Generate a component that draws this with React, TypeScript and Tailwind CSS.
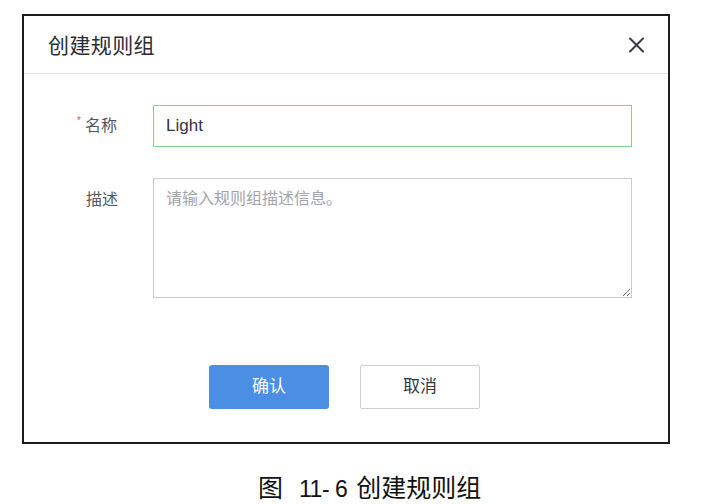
import React from "react";

const font = { fontFamily: '"Liberation Sans", "Noto Sans CJK SC", sans-serif' };

export default function App() {
  return (
    <div className="w-[718px] h-[504px] bg-white overflow-hidden" style={font}>
      <div className="pt-[14px] pl-[22px]">
        <div className="w-[648px] h-[430px] border-2 border-[#1c1c1c] flex flex-col">
          <div className="h-[58px] shrink-0 border-b border-[#e3e4e8] flex items-center justify-between pl-[24px] pr-[23px]">
            <span className="text-[21px] leading-none text-[#2b2b36] tracking-[0.4px] pt-[1px]">创建规则组</span>
            <svg width="17" height="16" viewBox="0 0 17 16" className="text-[#3a3a48]">
              <path d="M2 1.5 L15 14.5 M15 1.5 L2 14.5" stroke="currentColor" strokeWidth="2" strokeLinecap="round" />
            </svg>
          </div>
          <div className="flex flex-col pt-[31px]">
            <div className="flex items-center h-[42px]">
              <div className="w-[107px] shrink-0 flex justify-end pr-[14px] text-[16px] text-[#555560]">
                <span className="text-[#e05555] text-[10px] self-start mt-[-1px] mr-[4px]">*</span>
                <span>名称</span>
              </div>
              <div className="ml-[22px] w-[479px] h-[42px] border border-[#83d293] flex items-center px-[12px] text-[17px] text-[#333340]">
                Light
              </div>
            </div>
            <div className="flex items-start mt-[31px]">
              <div className="w-[107px] shrink-0 flex justify-end pr-[13px] pt-[10px] text-[16px] text-[#555560]">
                <span>描述</span>
              </div>
              <textarea
                className="ml-[22px] w-[479px] h-[120px] border border-[#c9cad2] px-[12px] py-[8px] text-[16px] text-[#333] placeholder:text-[#a2a3ab] outline-none resize-y"
                placeholder="请输入规则组描述信息。"
                style={font}
              />
            </div>
            <div className="flex mt-[67px] pl-[185px] gap-[31px]">
              <button className="w-[120px] h-[44px] rounded-[3px] bg-[#4a8fe3] text-white text-[17px]">确认</button>
              <button className="w-[120px] h-[44px] rounded-[2px] bg-white border border-[#cfd0d6] text-[#333340] text-[17px]">取消</button>
            </div>
          </div>
        </div>
      </div>
      <div className="mt-[28px] pl-[258px] flex items-baseline leading-[28px] text-[#111] whitespace-pre" style={{ fontFamily: '"Noto Sans CJK SC", sans-serif' }}>
        <span className="text-[25px]">图</span>
        <span className="ml-[16px] text-[23px] tracking-[-0.5px]" style={{ fontFamily: '"Liberation Sans", sans-serif' }}>11- 6</span>
        <span className="ml-[9px] text-[25px]">创建规则组</span>
      </div>
    </div>
  );
}
